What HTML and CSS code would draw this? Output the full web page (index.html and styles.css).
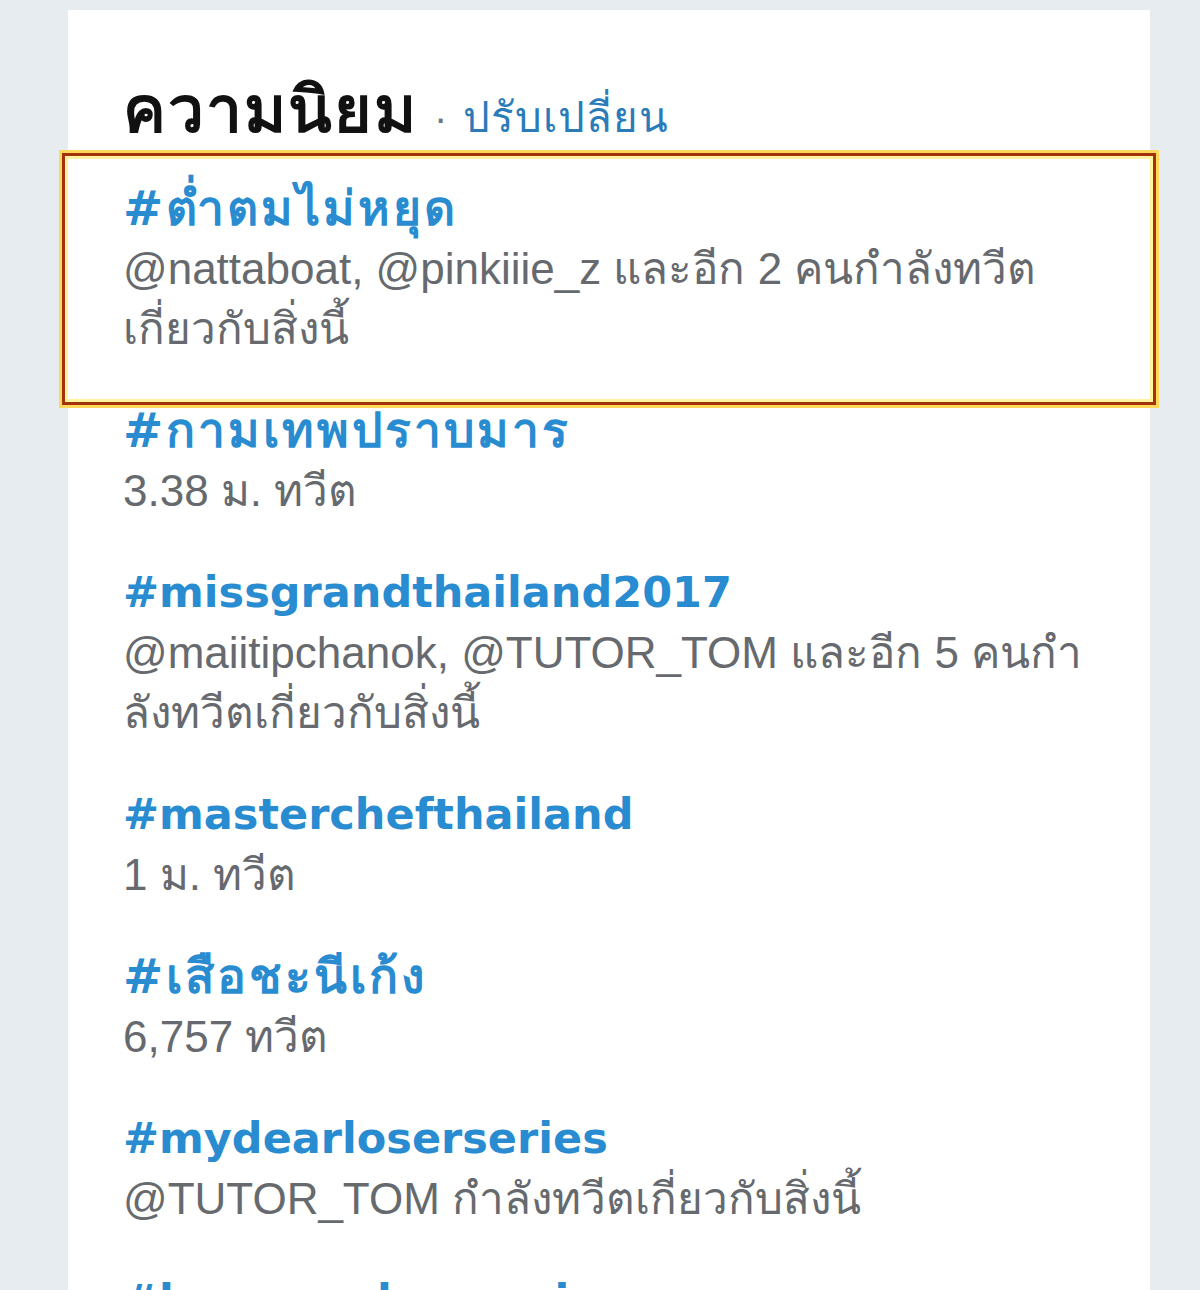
FILE: index.html
```html
<!DOCTYPE html>
<html lang="th">
<head>
<meta charset="utf-8">
<title>ความนิยม</title>
<link rel="stylesheet" href="styles.css">
</head>
<body>
<div class="card">
  <div class="header">
    <h2 class="title">ความนิยม</h2>
    <span class="dot">·</span>
    <a class="change" href="#">ปรับเปลี่ยน</a>
  </div>
  <ul class="trends">
    <li class="trend highlighted">
      <a class="tag th" href="#">#ต่ำตมไม่หยุด</a>
      <div class="meta">@nattaboat, @pinkiiie_z และอีก 2 คนกำลังทวีต<br>เกี่ยวกับสิ่งนี้</div>
      <span class="mark"></span>
    </li>
    <li class="trend">
      <a class="tag th" href="#">#กามเทพปราบมาร</a>
      <div class="meta">3.38 ม. ทวีต</div>
    </li>
    <li class="trend">
      <a class="tag" href="#">#missgrandthailand2017</a>
      <div class="meta">@maiitipchanok, @TUTOR_TOM และอีก 5 คนกำ<br>ลังทวีตเกี่ยวกับสิ่งนี้</div>
    </li>
    <li class="trend">
      <a class="tag" href="#">#masterchefthailand</a>
      <div class="meta">1 ม. ทวีต</div>
    </li>
    <li class="trend">
      <a class="tag th" href="#">#เสือชะนีเก้ง</a>
      <div class="meta">6,757 ทวีต</div>
    </li>
    <li class="trend">
      <a class="tag" href="#">#mydearloserseries</a>
      <div class="meta">@TUTOR_TOM กำลังทวีตเกี่ยวกับสิ่งนี้</div>
    </li>
    <li class="trend">
      <a class="tag" href="#">#lovesongloveseries</a>
      <div class="meta">1.2 ม. ทวีต</div>
    </li>
  </ul>
</div>
</body>
</html>
```

FILE: styles.css
```css
html, body {
  margin: 0;
  padding: 0;
}
body {
  background: #e6ecf0;
  height: 1290px;
  overflow: hidden;
  font-family: "Liberation Sans", "Noto Sans", sans-serif;
}
.card {
  margin: 10px 0 0 68px;
  width: 1082px;
  min-height: 1300px;
  background: #ffffff;
  box-sizing: border-box;
  padding: 70px 0 0 55px;
}
.header {
  display: flex;
  align-items: baseline;
  gap: 16px;
  height: 60px;
  line-height: 60px;
}
.title {
  margin: 0;
  font-size: 64px;
  letter-spacing: 2px;
  font-weight: 700;
  color: #111111;
}
.dot {
  font-size: 40px;
  color: #657786;
}
.change {
  font-size: 42px;
  letter-spacing: 1px;
  color: #2b7bb9;
  text-decoration: none;
}
.trends {
  list-style: none;
  margin: 37px 0 0;
  padding: 0;
  display: flex;
  flex-direction: column;
  gap: 40px;
}
.trend {
  position: relative;
}
.tag {
  display: block;
  font-family: "DejaVu Sans", sans-serif;
  font-weight: 700;
  font-size: 43px;
  line-height: 62px;
  color: #2a8cd0;
  text-decoration: none;
}
.tag.th {
  font-size: 48px;
  letter-spacing: 3px;
}
.meta {
  font-size: 44px;
  line-height: 60px;
  color: #666a6e;
}
.mark {
  position: absolute;
  left: -61px;
  top: -24px;
  width: 1094px;
  height: 252px;
  box-sizing: border-box;
  border: 3px solid #a3320a;
  box-shadow: 0 0 0 3px #ffd75a, inset 0 0 0 3px #fff3a0;
  pointer-events: none;
}
```
